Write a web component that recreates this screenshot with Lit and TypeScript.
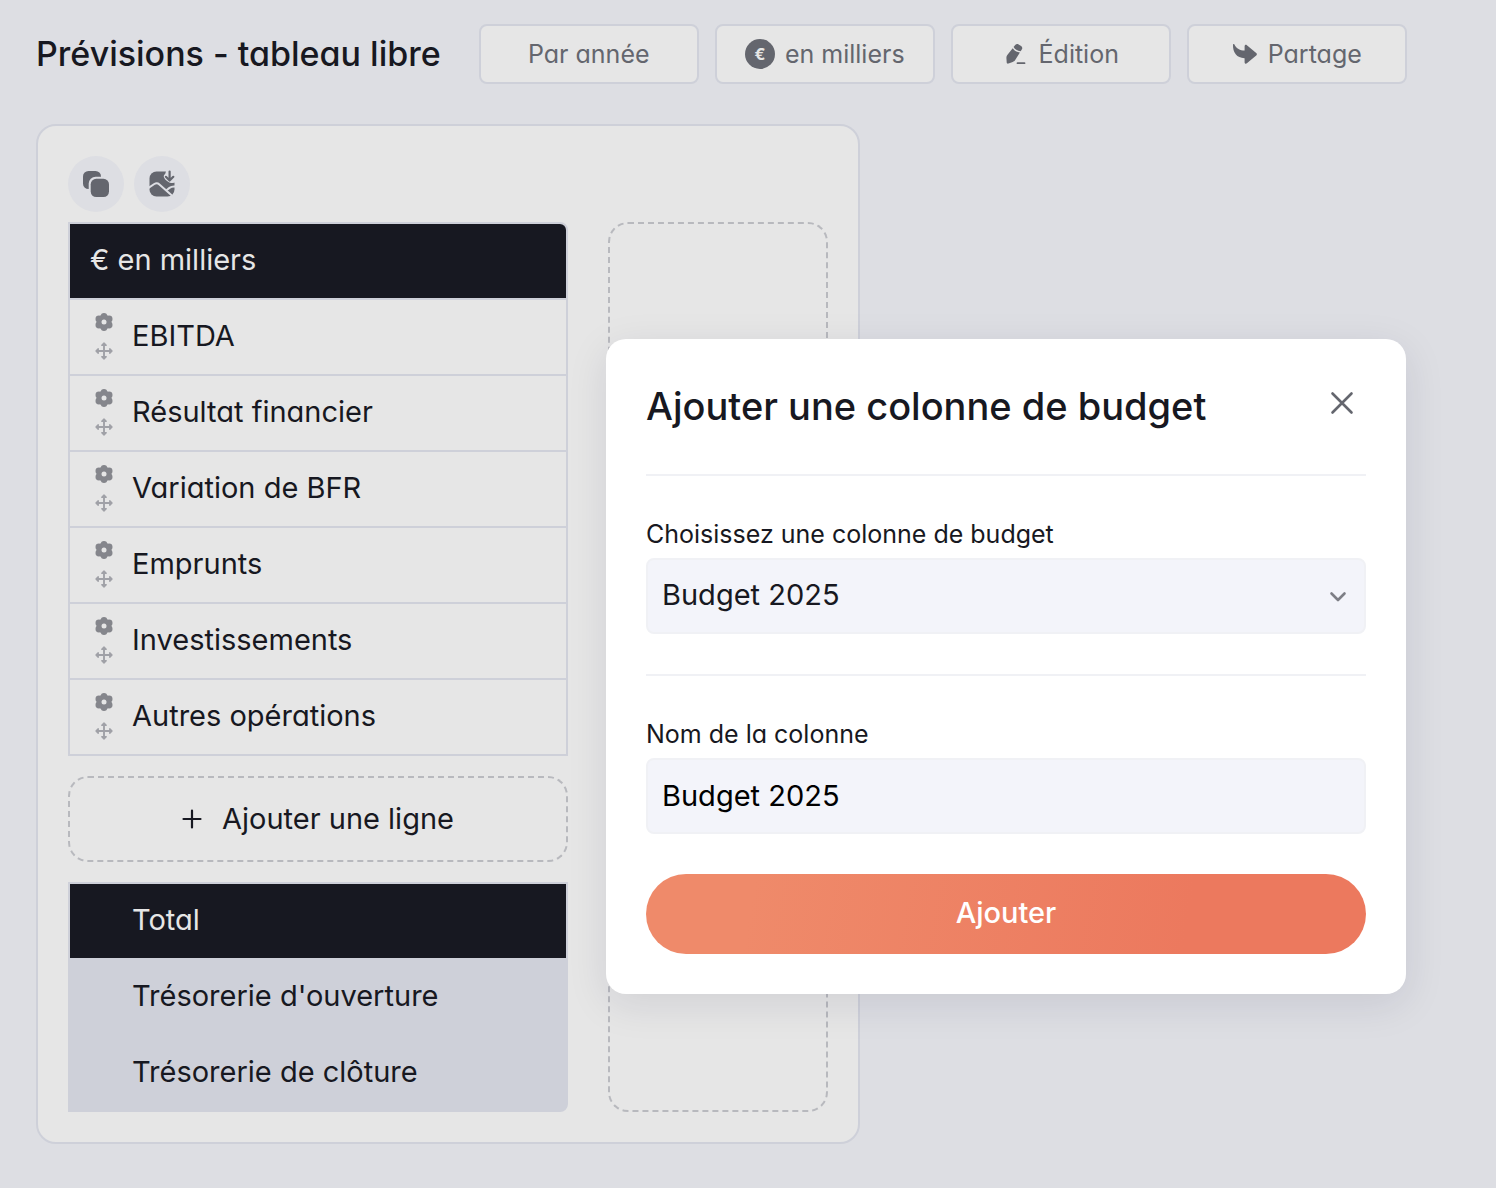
import { LitElement, html, css, svg } from "lit";
import { customElement, state } from "lit/decorators.js";

const gearIcon = svg`
  <svg class="icon" width="20" height="20" viewBox="0 0 20 20" aria-hidden="true">
    <g fill="currentColor">
      <circle cx="10" cy="4.200" r="3.200"/>
      <circle cx="10" cy="15.800" r="3.200"/>
      <circle cx="4.900" cy="7" r="3.400"/>
      <circle cx="15.100" cy="7" r="3.400"/>
      <circle cx="4.900" cy="13" r="3.400"/>
      <circle cx="15.100" cy="13" r="3.400"/>
      <circle cx="10" cy="10" r="7.400"/>
    </g>
    <circle class="hole" cx="10" cy="10" r="2.500"/>
  </svg>`;

const moveIcon = svg`
  <svg class="icon" width="20" height="20" viewBox="0 0 20 20" aria-hidden="true">
    <path fill="none" stroke="currentColor" stroke-width="1.900" stroke-linecap="round" stroke-linejoin="round" d="M10 3v14M3 10h14"/>
    <path fill="currentColor" stroke="currentColor" stroke-width="1.400" stroke-linejoin="round" d="M10 2 7.800 4.200h4.400ZM10 18l2.200-2.200H7.800ZM2 10l2.200 2.200V7.800ZM18 10l-2.200-2.200v4.400Z"/>
  </svg>`;

const editIcon = svg`
  <svg class="icon" width="26" height="22" viewBox="-2 0 26 22" aria-hidden="true">
    <path fill="currentColor" d="M8.600 4 10.200 2c.9-1.100 2.200-1.300 3.400-.6l2.500 1.600c1.200.8 1.500 2.100.8 3.300l-1.200 2C12.700 7.800 10.200 6.500 8.600 4Z"/>
    <path fill="currentColor" d="M7.700 5.200c1.600 2.400 4 3.800 7.200 4.300l-4.700 7.600c-.7 1-1.400 1.500-2.500 1.900l-4.200 1.600c-1 .4-1.700 0-1.800-1l-.3-4.500c-.1-1.200.2-2.100.9-3Z"/>
    <path fill="none" stroke="currentColor" stroke-width="1.800" stroke-linecap="round" d="M12.500 20.200h7"/>
  </svg>`;

const shareIcon = svg`
  <svg class="icon" width="26" height="22" viewBox="0 0 26 22" aria-hidden="true">
    <path fill="currentColor" d="M1 1.600c0-.8 1-.9 1.400-.2C4.500 5.600 8 7.400 12.600 7.400V3.300c0-1.400 1.200-2 2.300-1.100l9.300 7.900c.9.800.9 1.700 0 2.500l-9.300 7.700c-1.100.9-2.300.3-2.300-1.100v-4C5 15.300.6 9.600 1 1.600Z"/>
  </svg>`;

const copyIcon = svg`
  <svg class="icon" width="28" height="28" viewBox="0 0 28 28" aria-hidden="true">
    <rect x="1" y="1" width="18" height="18" rx="5.500" fill="currentColor"/>
    <rect class="cut" x="6.700" y="6.800" width="23" height="23" rx="7"/>
    <rect x="8.700" y="8.800" width="18.300" height="18.200" rx="5.500" fill="currentColor"/>
  </svg>`;

const imageIcon = svg`
  <svg class="icon" width="28" height="28" viewBox="0 0 28 28" aria-hidden="true">
    <rect x="1.500" y="1.500" width="25" height="25" rx="7" fill="currentColor"/>
    <path class="cut" d="M18 0H28v12c-1.800 1.200-4.200 1.400-6.700.4-2.200-.9-3.800-2.400-5-4.400-.8-1.400-.8-2.500.3-3.600 1-.8 1.400-2.600 1.400-4.400Z"/>
    <path class="cut-line" d="M.5 17.800 6.300 14c1.800-1.100 3.500-1 5.100.4L25 26.500M18.500 20.200l3-2.300c1.600-1.200 3.300-1.600 6-1.300"/>
    <path fill="none" stroke="currentColor" stroke-width="2.200" stroke-linecap="round" stroke-linejoin="round" d="M21.600 1.500v8.500M17.900 6.800l3.700 3.700 3.700-3.700"/>
  </svg>`;

const plusIcon = svg`
  <svg class="icon" width="20" height="20" viewBox="0 0 20 20" aria-hidden="true">
    <path fill="none" stroke="currentColor" stroke-width="2.200" stroke-linecap="round" d="M10 1.500v17M1.500 10h17"/>
  </svg>`;

const closeIcon = svg`
  <svg class="icon" width="24" height="24" viewBox="0 0 24 24" aria-hidden="true">
    <path fill="none" stroke="currentColor" stroke-width="2.600" stroke-linecap="round" d="m2.500 2.500 19 19M21.500 2.500l-19 19"/>
  </svg>`;

const chevronIcon = svg`
  <svg class="chevron" width="18" height="12" viewBox="0 0 18 12" aria-hidden="true">
    <path fill="none" stroke="currentColor" stroke-width="2.600" stroke-linecap="round" stroke-linejoin="round" d="m2.500 2.500 6.500 6.500 6.500-6.500"/>
  </svg>`;

@customElement("app-root")
export class AppRoot extends LitElement {
  @state() private columnName = "Budget 2025";

  private rows = [
    "EBITDA",
    "Résultat financier",
    "Variation de BFR",
    "Emprunts",
    "Investissements",
    "Autres opérations",
  ];

  static styles = css`
    :host {
      display: block;
      min-height: 100vh;
      box-sizing: border-box;
      position: relative;
      padding: 24px 36px 44px;
      background: #dddee3;
      color: #171821;
      font-family: Inter, "Open Sans", sans-serif;
      font-feature-settings: "cv11";
      font-size: 29px;
      line-height: 36px;
    }
    *, *::before, *::after { box-sizing: border-box; }
    button, input, select {
      font: inherit;
      font-feature-settings: inherit;
      color: inherit;
      margin: 0;
    }
    button { cursor: pointer; }
    h1, h2 { margin: 0; font-weight: 500; }
    .icon { display: block; flex: none; }

    .toolbar { display: flex; align-items: center; gap: 38px; }
    .page-title { font-size: 34px; line-height: 40px; white-space: nowrap; min-width: 404px; }
    .actions { display: flex; gap: 16px; }
    .action {
      display: flex;
      align-items: center;
      justify-content: center;
      gap: 10px;
      width: 220px;
      height: 60px;
      padding: 0;
      border: 2px solid #ced0d9;
      border-radius: 8px;
      background: #e6e6e6;
      color: #64666e;
      font-size: 25px;
      white-space: nowrap;
    }
    .coin {
      width: 30px;
      height: 30px;
      border-radius: 50%;
      background: #64666e;
      color: #e6e6e6;
      font-size: 16px;
      font-weight: 700;
      line-height: 30px;
    }

    .card {
      width: fit-content;
      margin-top: 40px;
      padding: 30px;
      border: 2px solid #ced0d9;
      border-radius: 20px;
      background: #e6e6e6;
    }
    .tools { display: flex; gap: 10px; margin-bottom: 10px; }
    .tool {
      display: grid;
      place-items: center;
      width: 56px;
      height: 56px;
      padding: 0;
      border: 0;
      border-radius: 50%;
      background: #dddee3;
      color: #64666e;
    }
    .cut { fill: #dddee3; }
    .cut-line { fill: none; stroke: #dddee3; stroke-width: 2; }
    .hole { fill: #e6e6e6; }

    .board { display: flex; gap: 40px; }
    .sheet { display: flex; flex-direction: column; gap: 20px; width: 500px; }
    .placeholder {
      width: 220px;
      padding: 0;
      border: 2px dashed #b8b9be;
      border-radius: 20px;
      background: none;
    }

    .table {
      width: 100%;
      border: 2px solid #ced0d9;
      border-spacing: 0;
      overflow: hidden;
    }
    .lines { border-top-right-radius: 8px; }
    .totals { border-bottom-right-radius: 8px; background: #ced0d9; }
    .cell {
      height: 76px;
      padding: 0 20px 2px;
      border-bottom: 2px solid #ced0d9;
      font-weight: 400;
      text-align: left;
    }
    .table tr:last-child > .last { height: 74px; border-bottom: 0; }
    .dark { background: #171821; color: #e6e6e6; }
    .indent { padding-left: 62px; }
    .line { display: flex; align-items: center; gap: 18px; padding-left: 4px; }
    .handles { display: flex; flex-direction: column; gap: 9px; }
    .handle { display: block; padding: 0; border: 0; background: none; color: #85868c; }
    .drag { color: #a0a1a7; cursor: move; }

    .add-line {
      display: flex;
      align-items: center;
      justify-content: center;
      gap: 20px;
      height: 86px;
      padding: 0;
      border: 2px dashed #b8b9be;
      border-radius: 20px;
      background: none;
    }

    .modal {
      position: absolute;
      top: 339px;
      right: 90px;
      width: 800px;
      padding: 40px;
      border-radius: 20px;
      background: #ffffff;
      box-shadow: 0 10px 40px rgba(23, 24, 60, 0.1);
    }
    .modal-head {
      display: flex;
      justify-content: space-between;
      align-items: flex-start;
      padding-bottom: 40px;
    }
    .modal-title { font-size: 38px; line-height: 55px; }
    .close { display: grid; place-items: center; width: 48px; height: 48px; padding: 0; border: 0; background: none; color: #64666e; }
    .field { border-top: 2px solid #f0f1f5; padding: 40px 0; }
    .label { display: block; margin-bottom: 6px; font-size: 25px; }
    .control { position: relative; }
    .input {
      display: block;
      appearance: none;
      width: 100%;
      height: 76px;
      padding: 0 14px 2px;
      border: 2px solid #f0f1f5;
      border-radius: 8px;
      background: #f3f4fa;
      outline: none;
    }
    .name { color: #000000; }
    .chevron { position: absolute; right: 19px; top: 33px; color: #7d7e85; pointer-events: none; }
    .submit {
      display: block;
      width: 100%;
      height: 80px;
      padding: 0 0 2px;
      border: 0;
      border-radius: 40px;
      background: linear-gradient(100deg, #ef8a6a 15%, #ec795e 75%);
      color: #ffffff;
      font-weight: 500;
    }
  `;

  private onName(e: Event) {
    this.columnName = (e.target as HTMLInputElement).value;
  }

  render() {
    return html`
      <header class="toolbar">
        <h1 class="page-title">Prévisions - tableau libre</h1>
        <nav class="actions">
          <button class="action">Par année</button>
          <button class="action"><span class="coin">€</span>en milliers</button>
          <button class="action">${editIcon}Édition</button>
          <button class="action">${shareIcon}Partage</button>
        </nav>
      </header>

      <main class="card">
        <div class="tools">
          <button class="tool" aria-label="Copier">${copyIcon}</button>
          <button class="tool" aria-label="Télécharger l'image">${imageIcon}</button>
        </div>
        <div class="board">
          <div class="sheet">
            <table class="table lines">
              <thead>
                <tr><th class="cell dark" scope="col">€ en milliers</th></tr>
              </thead>
              <tbody>
                ${this.rows.map(
                  (row) => html`
                    <tr>
                      <th class="cell last" scope="row">
                        <div class="line">
                          <span class="handles">
                            <button class="handle" aria-label="Paramètres">${gearIcon}</button>
                            <button class="handle drag" aria-label="Déplacer">${moveIcon}</button>
                          </span>
                          ${row}
                        </div>
                      </th>
                    </tr>
                  `
                )}
              </tbody>
            </table>
            <button class="add-line">${plusIcon}Ajouter une ligne</button>
            <table class="table totals">
              <tbody>
                <tr><th class="cell dark indent" scope="row">Total</th></tr>
                <tr><th class="cell indent" scope="row">Trésorerie d'ouverture</th></tr>
                <tr><th class="cell indent last" scope="row">Trésorerie de clôture</th></tr>
              </tbody>
            </table>
          </div>
          <button class="placeholder" aria-label="Ajouter une colonne"></button>
        </div>
      </main>

      <section class="modal" role="dialog" aria-labelledby="modal-title">
        <div class="modal-head">
          <h2 class="modal-title" id="modal-title">Ajouter une colonne de budget</h2>
          <button class="close" aria-label="Fermer">${closeIcon}</button>
        </div>
        <div class="field">
          <label class="label" for="budget">Choisissez une colonne de budget</label>
          <div class="control">
            <select class="input" id="budget">
              <option>Budget 2025</option>
            </select>
            ${chevronIcon}
          </div>
        </div>
        <div class="field">
          <label class="label" for="name">Nom de la colonne</label>
          <input class="input name" id="name" type="text" .value=${this.columnName} @input=${this.onName} />
        </div>
        <button class="submit">Ajouter</button>
      </section>
    `;
  }
}
